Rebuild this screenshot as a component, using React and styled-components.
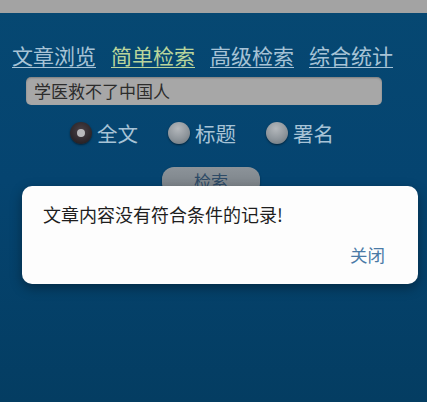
import React from "react";
import styled, { createGlobalStyle } from "styled-components";

const GlobalStyle = createGlobalStyle`
  html, body {
    margin: 0;
    padding: 0;
    background: #053f65;
  }
  body {
    font-family: "Noto Sans CJK SC", "Noto Sans", sans-serif;
  }
`;

const Screen = styled.div`
  position: relative;
  width: 427px;
  height: 402px;
  overflow: hidden;
  background: linear-gradient(180deg, #064872 0%, #054470 45%, #043d62 100%);
`;

const TopBar = styled.div`
  height: 13px;
  background: #a3a3a3;
`;

const Nav = styled.nav`
  display: flex;
  gap: 15px;
  padding: 30px 0 0 12px;
`;

const NavLink = styled.a`
  font-size: 21px;
  line-height: 25px;
  color: ${(p) => (p.$active ? "#b9d59c" : "#a7c3d6")};
  text-decoration: underline;
  text-underline-offset: 3px;
  text-decoration-thickness: 1px;
`;

const SearchInput = styled.div`
  margin: 9px 0 0 26px;
  width: 356px;
  height: 28px;
  box-sizing: border-box;
  border-radius: 5px;
  background: #a7a7a7;
  padding-left: 8px;
  font-size: 17px;
  line-height: 28px;
  color: #2c2c2c;
  box-shadow: inset 0 1px 2px rgba(0, 0, 0, 0.25);
`;

const RadioRow = styled.div`
  display: flex;
  gap: 30px;
  padding: 15px 0 0 70px;
`;

const RadioItem = styled.label`
  display: flex;
  align-items: center;
  gap: 5px;
  font-size: 20.5px;
  line-height: 26px;
  color: #a7c3d6;
`;

const RadioDot = styled.span`
  position: relative;
  width: 22px;
  height: 22px;
  border-radius: 50%;
  box-sizing: border-box;
  background: ${(p) =>
    p.$checked
      ? "radial-gradient(circle at 50% 40%, #4a4248 0%, #2a2428 70%, #1a1618 100%)"
      : "radial-gradient(circle at 45% 30%, #b4b8bc 0%, #8e959b 55%, #6a7278 100%)"};
  box-shadow: 0 1px 2px rgba(0, 0, 0, 0.5);
  &::after {
    content: "";
    display: ${(p) => (p.$checked ? "block" : "none")};
    position: absolute;
    left: 7px;
    top: 7px;
    width: 8px;
    height: 8px;
    border-radius: 50%;
    background: #b9b9bc;
  }
`;

const SearchButton = styled.div`
  margin: 21px 0 0 162px;
  width: 98px;
  height: 28px;
  border-radius: 12px;
  background: linear-gradient(180deg, #8c9399 0%, #767d83 100%);
  box-shadow: 0 1px 2px rgba(0, 0, 0, 0.4);
  text-align: center;
  font-size: 17px;
  line-height: 28px;
  color: #2d4a66;
`;

const Overlay = styled.div`
  position: absolute;
  inset: 0;
`;

const Dialog = styled.div`
  position: absolute;
  left: 22px;
  top: 186px;
  width: 396px;
  height: 98px;
  box-sizing: border-box;
  background: #fdfdfd;
  border-radius: 10px;
  box-shadow: 0 4px 12px rgba(0, 0, 0, 0.35);
  display: flex;
  flex-direction: column;
  padding: 15px 33px 0 21px;
`;

const Message = styled.div`
  font-size: 18px;
  line-height: 26px;
  color: #1e1e1e;
`;

const DialogActions = styled.div`
  display: flex;
  justify-content: flex-end;
  margin-top: 16px;
`;

const CloseButton = styled.span`
  font-size: 17.5px;
  line-height: 24px;
  color: #4a7aa6;
`;

export default function App() {
  return (
    <>
      <GlobalStyle />
      <Screen>
        <TopBar />
        <Nav>
          <NavLink>文章浏览</NavLink>
          <NavLink $active>简单检索</NavLink>
          <NavLink>高级检索</NavLink>
          <NavLink>综合统计</NavLink>
        </Nav>
        <SearchInput>学医救不了中国人</SearchInput>
        <RadioRow>
          <RadioItem>
            <RadioDot $checked />
            全文
          </RadioItem>
          <RadioItem>
            <RadioDot />
            标题
          </RadioItem>
          <RadioItem>
            <RadioDot />
            署名
          </RadioItem>
        </RadioRow>
        <SearchButton>检索</SearchButton>
        <Overlay>
          <Dialog>
            <Message>文章内容没有符合条件的记录!</Message>
            <DialogActions>
              <CloseButton>关闭</CloseButton>
            </DialogActions>
          </Dialog>
        </Overlay>
      </Screen>
    </>
  );
}
